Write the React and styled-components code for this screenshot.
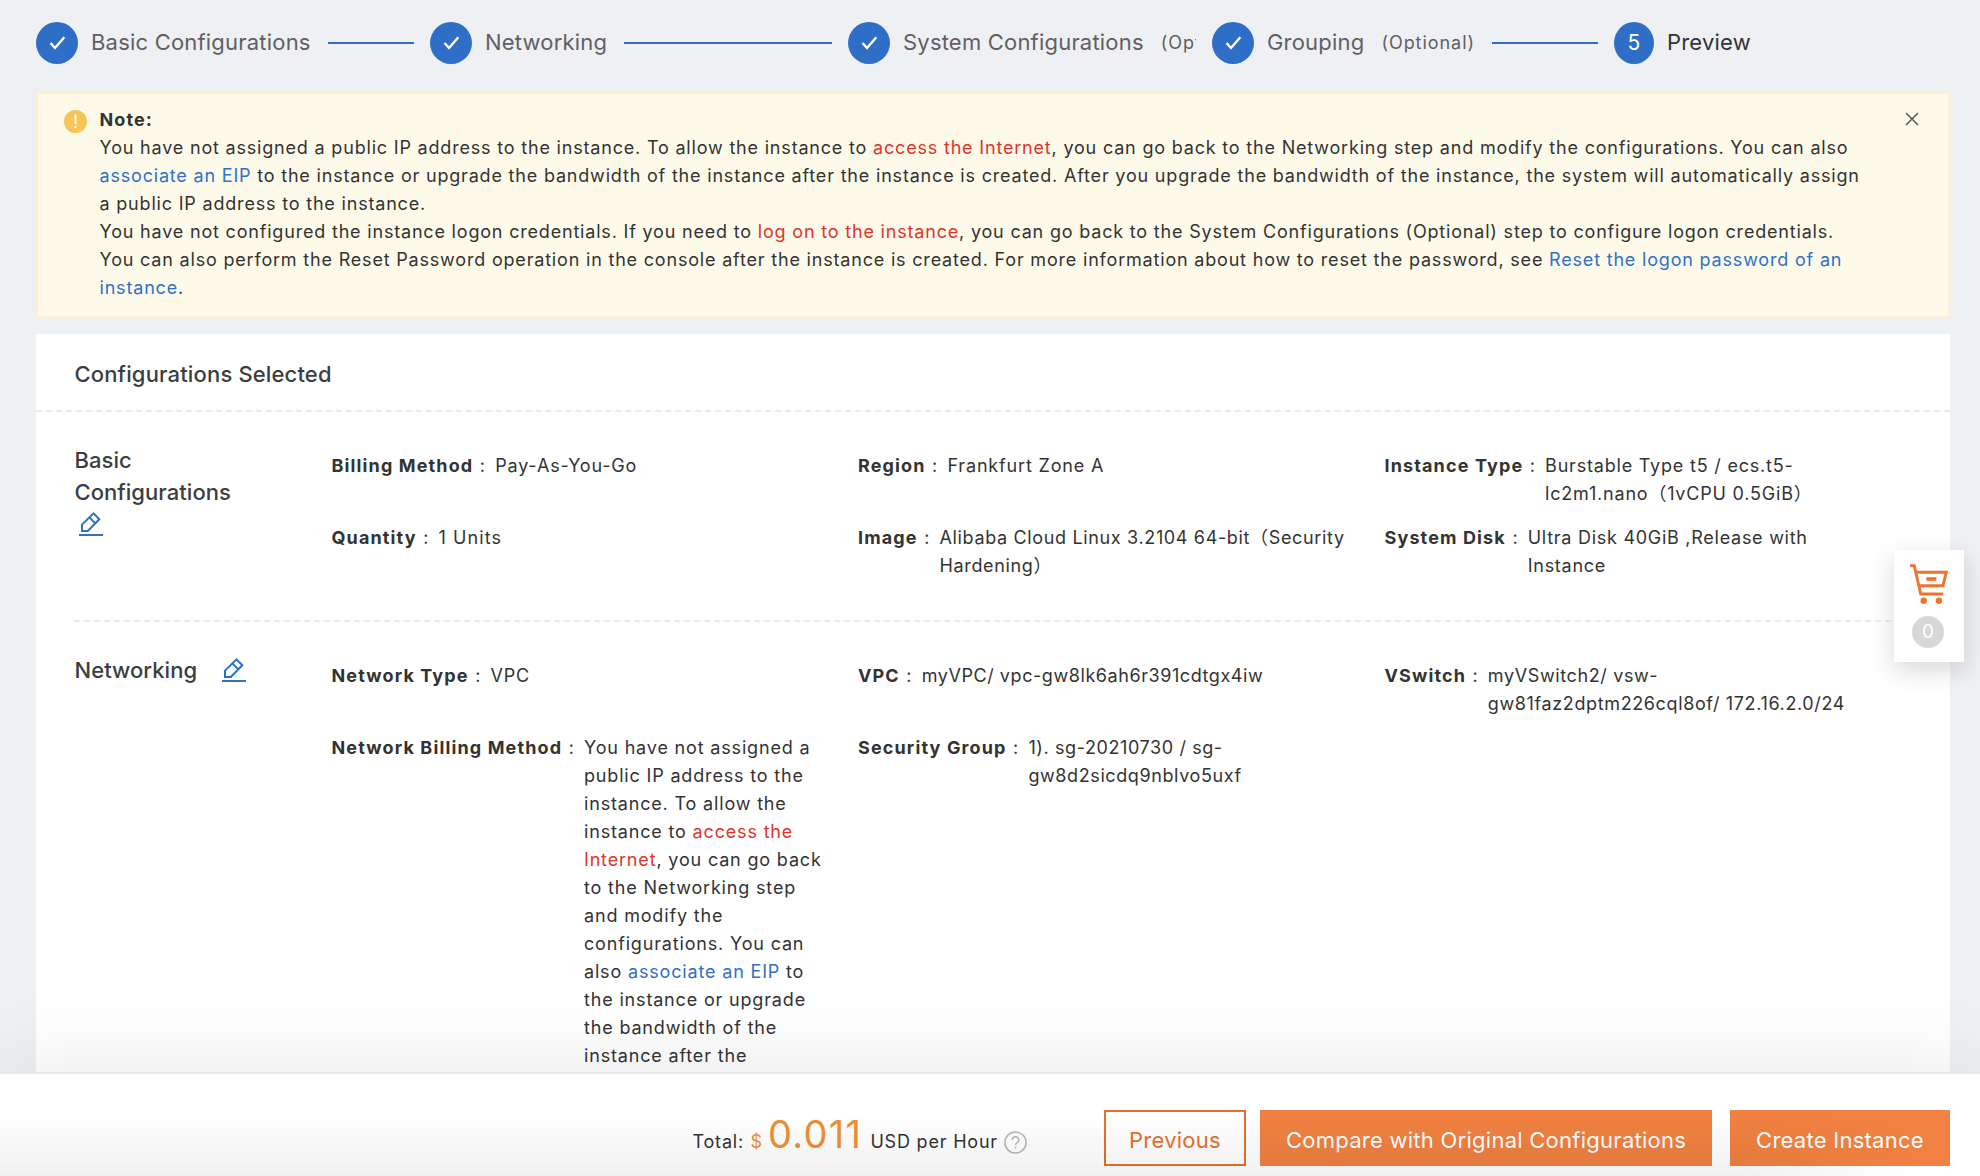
import React from "react";
import styled, { createGlobalStyle, css } from "styled-components";

const Global = createGlobalStyle`
  * { box-sizing: border-box; }
  html, body { margin: 0; padding: 0; }
  body {
    background: #eff0f4;
    color: #333;
    font-family: Inter, "Liberation Sans", "Noto Sans CJK SC", sans-serif;
    font-size: 18px;
    line-height: 28px;
    letter-spacing: 0.81px;
    overflow: hidden;
  }
`;

const Page = styled.div`
  width: 1980px;
  height: 1176px;
  display: flex;
  flex-direction: column;
  overflow: hidden;
`;

const Scroll = styled.main`
  flex: 1;
  min-height: 0;
  overflow: hidden;
  padding: 22px 30px 0 36px;
`;

const Steps = styled.nav`
  display: flex;
  height: 42px;
`;

const Step = styled.div`
  display: flex;
  align-items: center;
  flex: none;
  width: ${(p) => p.$width}px;
  padding-right: 16px;
`;

const StepBody = styled.div`
  display: flex;
  align-items: center;
  flex: 1;
  min-width: 0;
  overflow: hidden;
  white-space: nowrap;
  line-height: 40px;
`;

const Dot = styled.div`
  display: flex;
  align-items: center;
  justify-content: center;
  flex: none;
  width: ${(p) => p.$width || 42}px;
  height: 42px;
  margin-right: 13px;
  border-radius: 50%;
  background: #2e6ec6;
  color: #fff;
  font-size: 21px;
  letter-spacing: 0;
`;

const StepTitle = styled.span`
  flex: none;
  padding-bottom: 2px;
  font-size: 22px;
  letter-spacing: 0.2px;
  color: ${(p) => (p.$current ? "#333" : "#5f6062")};
`;

const StepHint = styled.span`
  flex: none;
  margin-left: 17px;
  font-size: 18px;
  letter-spacing: 0.95px;
  color: #5f6062;
`;

const StepLine = styled.i`
  flex: 1;
  height: 2px;
  margin-left: 17px;
  background: #2e6ec6;
`;

const Notice = styled.section`
  display: flex;
  margin-top: 28px;
  height: 226px;
  padding: 12px 29px 12px 26px;
  border: 2px solid #fcf0d0;
  background: #fefaea;
`;

const NoticeIcon = styled.svg`
  flex: none;
  width: 23px;
  height: 23px;
  margin-top: 4px;
  margin-right: 12.5px;
`;

const NoticeText = styled.div`
  flex: none;
  width: 1771px;
`;

const NoticeTitle = styled.div`
  font-weight: 700;
  letter-spacing: 1.1px;
`;

const Line = styled.div``;

const CloseIcon = styled.svg`
  flex: none;
  width: 14px;
  height: 14px;
  margin-top: 6px;
  margin-left: auto;
`;

const Red = styled.span`
  color: #e0352b;
`;

const Link = styled.a`
  color: #2e71c9;
`;

const Card = styled.section`
  margin-top: 16px;
  background: #fff;
`;

const CardTitle = styled.h2`
  margin: 0;
  height: 78px;
  padding: 0 38.5px;
  border-bottom: 2px dashed #ebebeb;
  font-size: 22px;
  font-weight: 500;
  line-height: 80px;
  letter-spacing: 0.15px;
  color: #3a3e41;
`;

const Section = styled.div`
  display: flex;
  margin: 0 39px 0 38px;
  padding: 32px 0 24px;
  border-bottom: 2px dashed #ebebeb;
`;

const SectionHead = styled.div`
  display: flex;
  flex-wrap: wrap;
  align-content: flex-start;
  column-gap: 19.5px;
  width: 180px;
  margin-right: 77.5px;
`;

const SectionTitle = styled.h3`
  margin: 0 0 0 0.5px;
  font-size: 22px;
  font-weight: 500;
  line-height: 32px;
  letter-spacing: 0.05px;
  color: #3a3e41;
`;

const EditIcon = styled.svg`
  width: 24px;
  height: 24px;
  margin: 4px 0 4px 5px;
`;

const Fields = styled.dl`
  display: grid;
  grid-template-columns: repeat(3, 1fr);
  flex: 1;
  margin: 0;
  padding-top: 8px;
`;

const Field = styled.div`
  display: flex;
  align-items: flex-start;
  padding-right: 32px;
  margin-bottom: 16px;
`;

const Label = styled.dt`
  flex: none;
  font-weight: 700;
  letter-spacing: 1.13px;

  &::after {
    content: ":";
    margin: 0 9px 0 6.5px;
    font-weight: 400;
  }
`;

const Value = styled.dd`
  margin: 0;
  min-width: 0;
  letter-spacing: ${(p) => p.$spacing ?? 0.83}px;
`;

const Footer = styled.footer`
  display: flex;
  align-items: flex-start;
  flex: none;
  height: 104px;
  padding: 36px 30px 0 0;
  border-top: 2px solid #e9e9e9;
  background: #fff;
  position: relative;
  box-shadow: 0 0 90px rgba(0, 0, 0, 0.1);

  &::after {
    content: "";
    position: absolute;
    inset: 40px 0 0 0;
    background: linear-gradient(rgba(0, 0, 0, 0), rgba(0, 0, 0, 0.06));
    mask-image: linear-gradient(90deg, #000 88%, transparent 97%);
    pointer-events: none;
  }
`;

const Total = styled.div`
  display: flex;
  align-items: baseline;
  margin-left: 692.5px;
  line-height: 49px;
  letter-spacing: 0.8px;
`;

const Currency = styled.span`
  margin: 0 6px 0 6.5px;
  letter-spacing: 0;
  color: #ef8f35;
`;

const Price = styled.span`
  margin-right: 8px;
  font-size: 38px;
  letter-spacing: 1.3px;
  color: #ef8f35;
`;

const HelpIcon = styled.svg`
  width: 23px;
  height: 23px;
  margin-top: 9px;
  margin-left: 6px;
  align-self: center;
`;

const buttonKind = {
  outline: css`
    border: 2px solid #e8702e;
    background: #fff;
    color: #e8702e;
  `,
  solid: css`
    border: 0;
    background: #f08142;
    color: #fff;
  `,
};

const Button = styled.button`
  flex: none;
  width: ${(p) => p.$width}px;
  height: 56px;
  margin-left: ${(p) => p.$gap || 0}px;
  padding: 3px 0 0;
  font-family: inherit;
  font-size: 22px;
  letter-spacing: 0.26px;
  white-space: nowrap;
  ${(p) => buttonKind[p.$kind]}
`;

const Actions = styled.div`
  display: flex;
  margin-left: auto;
`;

const Cart = styled.aside`
  position: fixed;
  top: 550px;
  left: 1894px;
  width: 70px;
  height: 112px;
  padding-top: 14px;
  display: flex;
  flex-direction: column;
  align-items: center;
  background: #fff;
  box-shadow: 0 8px 24px rgba(0, 0, 0, 0.16);
`;

const CartIcon = styled.svg`
  width: 38px;
  height: 40px;
`;

const CartCount = styled.span`
  width: 32px;
  height: 32px;
  margin-top: 12px;
  margin-right: 2px;
  border-radius: 50%;
  background: #d7d8d9;
  color: #fff;
  font-size: 19px;
  line-height: 31px;
  text-align: center;
  letter-spacing: 0;
`;

function Check() {
  return (
    <svg width="17" height="15" viewBox="0 0 17 15">
      <path d="M1.5 7 6 12 15.3 1.2" fill="none" stroke="#fff" strokeWidth="2.4" />
    </svg>
  );
}

function Edit() {
  return (
    <EditIcon viewBox="0 0 24 24" fill="none" stroke="#2e71c9" strokeWidth="2">
      <path d="M3 19V12.6L14.5 1.4 20.3 7.2 8.8 19ZM10.4 5.4 16.2 11.3" />
      <path d="M0 23H24" />
    </EditIcon>
  );
}

function Item({ label, spacing, children }) {
  return (
    <Field>
      <Label>{label}</Label>
      <Value $spacing={spacing}>{children}</Value>
    </Field>
  );
}

function Group({ title, children }) {
  return (
    <Section>
      <SectionHead>
        <SectionTitle>{title}</SectionTitle>
        <Edit />
      </SectionHead>
      <Fields>{children}</Fields>
    </Section>
  );
}

function PublicIpNotice() {
  return (
    <>
      You have not assigned a public IP address to the instance. To allow the instance to{" "}
      <Red>access the Internet</Red>, you can go back to the Networking step and modify the
      configurations. You can also <Link>associate an EIP</Link> to the instance or upgrade the
      bandwidth of the instance after the instance is created. After you upgrade the bandwidth of
      the instance, the system will automatically assign a public IP address to the instance.
    </>
  );
}

const steps = [
  { title: "Basic Configurations", width: 394, line: true },
  { title: "Networking", width: 418, line: true },
  { title: "System Configurations", hint: "(Optional)", width: 364 },
  { title: "Grouping", hint: "(Optional)", width: 402, line: true },
  { title: "Preview", width: 300, number: 5 },
];

export default function App() {
  return (
    <Page>
      <Global />
      <Scroll>
        <Steps>
          {steps.map((s) => (
            <Step key={s.title} $width={s.width}>
              <Dot $width={s.number ? 40 : 42}>{s.number || <Check />}</Dot>
              <StepBody>
                <StepTitle $current={!!s.number}>{s.title}</StepTitle>
                {s.hint && <StepHint>{s.hint}</StepHint>}
                {s.line && <StepLine />}
              </StepBody>
            </Step>
          ))}
        </Steps>

        <Notice>
          <NoticeIcon viewBox="0 0 23 23">
            <circle cx="11.5" cy="11.5" r="11.5" fill="#f5c558" />
            <path d="M11.5 4.5V14" stroke="#fff" strokeWidth="1.8" />
            <circle cx="11.5" cy="17" r="1.2" fill="#fff" />
          </NoticeIcon>
          <NoticeText>
            <NoticeTitle>Note:</NoticeTitle>
            <Line><PublicIpNotice /></Line>
            <Line>
              You have not configured the instance logon credentials. If you need to{" "}
              <Red>log on to the instance</Red>, you can go back to the System Configurations
              (Optional) step to configure logon credentials. You can also perform the Reset
              Password operation in the console after the instance is created. For more information
              about how to reset the password, see{" "}
              <Link>Reset the logon password of an instance</Link>.
            </Line>
          </NoticeText>
          <CloseIcon viewBox="0 0 14 14">
            <path d="M1 1 13 13M13 1 1 13" stroke="#555" strokeWidth="1.5" />
          </CloseIcon>
        </Notice>

        <Card>
          <CardTitle>Configurations Selected</CardTitle>
          <Group title="Basic Configurations">
            <Item label="Billing Method">Pay-As-You-Go</Item>
            <Item label="Region">Frankfurt Zone A</Item>
            <Item label="Instance Type" spacing={0.8}>Burstable Type t5 / ecs.t5-lc2m1.nano（1vCPU 0.5GiB）</Item>
            <Item label="Quantity" spacing={1.1}>1 Units</Item>
            <Item label="Image" spacing={0.65}>Alibaba Cloud Linux 3.2104 64-bit（Security Hardening）</Item>
            <Item label="System Disk" spacing={0.73}>Ultra Disk 40GiB ,Release with Instance</Item>
          </Group>
          <Group title="Networking">
            <Item label="Network Type">VPC</Item>
            <Item label="VPC" spacing={0.57}>myVPC/ vpc-gw8lk6ah6r391cdtgx4iw</Item>
            <Item label="VSwitch" spacing={0.62}>myVSwitch2/ vsw-gw81faz2dptm226cql8of/ 172.16.2.0/24</Item>
            <Item label="Network Billing Method"><PublicIpNotice /></Item>
            <Item label="Security Group" spacing={0.6}>1). sg-20210730 / sg-gw8d2sicdq9nblvo5uxf</Item>
          </Group>
        </Card>
      </Scroll>

      <Footer>
        <Total>
          Total:<Currency>$</Currency>
          <Price>0.011</Price>
          USD per Hour
          <HelpIcon viewBox="0 0 23 23" fill="none" stroke="#b5b5b5" strokeWidth="1.5">
            <circle cx="11.5" cy="11.5" r="10.6" />
            <path d="M8.3 9a3.2 3.2 0 1 1 4.6 2.9c-1 .5-1.4 1-1.4 2.3M11.5 15.8v1.8" />
          </HelpIcon>
        </Total>
        <Actions>
          <Button $kind="outline" $width={142}>Previous</Button>
          <Button $kind="solid" $width={452} $gap={14}>Compare with Original Configurations</Button>
          <Button $kind="solid" $width={220} $gap={18}>Create Instance</Button>
        </Actions>
      </Footer>

      <Cart>
        <CartIcon viewBox="0 0 38 40" fill="none" stroke="#ee732f" strokeWidth="2.9">
          <path d="M0 1.6H4.3L10.7 30H33.3M5.5 8.2H36.3L33 21.7H9" />
          <path d="M16.3 15H26.3" strokeWidth="3.6" />
          <circle cx="13.7" cy="36.7" r="3.2" fill="#ee732f" stroke="none" />
          <circle cx="29" cy="36.7" r="3.2" fill="#ee732f" stroke="none" />
        </CartIcon>
        <CartCount>0</CartCount>
      </Cart>
    </Page>
  );
}
